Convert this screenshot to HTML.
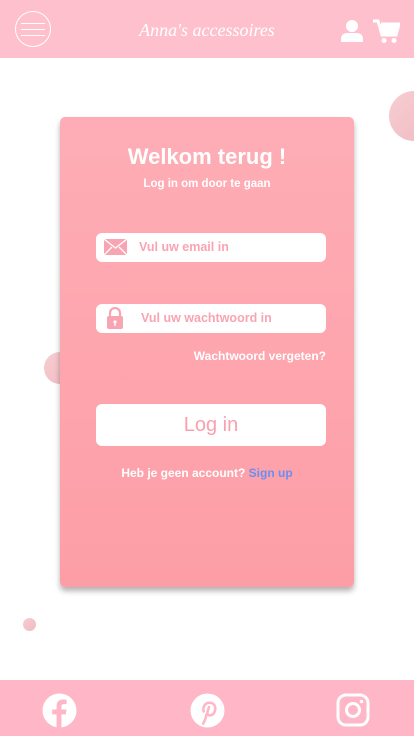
<!DOCTYPE html>
<html><head><meta charset="utf-8"><style>
*{margin:0;padding:0;box-sizing:border-box}
body{width:414px;height:736px;position:relative;overflow:hidden;background:#fff;font-family:"Liberation Sans",sans-serif}
.hdr{position:absolute;left:0;top:0;width:414px;height:58px;background:#ffc0cd}
.ttl{position:absolute;left:0;width:414px;top:20px;text-align:center;color:#fff;font-family:"Liberation Serif",serif;font-style:italic;font-size:18px}
.burg{position:absolute;left:15px;top:11px;width:36px;height:36px;border:1px solid #fff;border-radius:50%}
.burg i{position:absolute;left:5px;width:24px;height:1px;background:#fff}
.circ{position:absolute;border-radius:50%;background:linear-gradient(135deg,#f6ced3,#f0bac0)}
.card{position:absolute;left:60px;top:117px;width:294px;height:470px;border-radius:5px;background:linear-gradient(#feadb6,#fd9ea6);box-shadow:0 4px 6px rgba(0,0,0,.3)}
.t1{position:absolute;left:0;width:100%;top:27px;text-align:center;color:#fff;font-size:22px;font-weight:bold}
.t2{position:absolute;left:0;width:100%;top:61px;text-align:center;color:#fff;font-size:11.5px;font-weight:bold}
.inp{position:absolute;left:36px;width:230px;height:29px;background:#fff;border-radius:6px;color:#f9a4b2;font-size:12.5px;font-weight:bold}
.inp span{position:absolute;top:7px}
.btn{position:absolute;left:36px;top:287px;width:230px;height:42px;background:#fff;border-radius:6px;color:#fba0ad;font-size:20px;text-align:center;line-height:42px}
.ftr{position:absolute;left:0;top:680px;width:414px;height:56px;background:#ffb6c6}
</style></head><body>
<div class="hdr">
<div class="burg"><i style="top:11px"></i><i style="top:17px"></i><i style="top:23px"></i></div>
<div class="ttl">Anna's accessoires</div>
<svg style="position:absolute;left:340px;top:19px" width="24" height="24" viewBox="0 0 24 24"><circle cx="12" cy="7" r="6" fill="#fff"/><path d="M1 23v-3c0-4 3-6 6-6h10c3 0 6 2 6 6v3z" fill="#fff"/></svg>
<svg style="position:absolute;left:373px;top:19px" width="27" height="25" viewBox="0 0 27 25"><path d="M0 2h5l4 14h14l3-11H8" fill="none" stroke="#fff" stroke-width="3"/><path d="M7 5h19l-3 11H10z" fill="#fff"/><circle cx="11" cy="21.5" r="2.5" fill="#fff"/><circle cx="21" cy="21.5" r="2.5" fill="#fff"/></svg>
</div>
<div class="circ" style="left:389px;top:91px;width:50px;height:50px"></div>
<div class="circ" style="left:44px;top:352px;width:32px;height:32px"></div>
<div class="circ" style="left:23px;top:618px;width:13px;height:13px"></div>
<div class="card">
<div class="t1">Welkom terug !</div>
<div class="t2">Log in om door te gaan</div>
<div class="inp" style="top:116px"><svg style="position:absolute;left:8px;top:6px" width="23" height="16" viewBox="0 0 23 16"><rect width="23" height="16" fill="#f9a4b2"/><path d="M0 0l11.5 9L23 0M0 16l8-8M23 16l-8-8" stroke="#fff" stroke-width="1.3" fill="none"/></svg><span style="left:43px">Vul uw email in</span></div>
<div class="inp" style="top:187px"><svg style="position:absolute;left:10px;top:3px" width="18" height="22" viewBox="0 0 18 22"><path d="M4 10V6a5 5 0 0110 0v4" stroke="#f9a4b2" stroke-width="2.2" fill="none"/><rect x="1" y="9" width="16" height="13" rx="2" fill="#f9a4b2"/><circle cx="9" cy="15" r="1.6" fill="#fff"/><rect x="8.3" y="15" width="1.4" height="4" fill="#fff"/></svg><span style="left:45px">Vul uw wachtwoord in</span></div>
<div style="position:absolute;right:28px;top:232px;color:#fff;font-size:12px;font-weight:bold">Wachtwoord vergeten?</div>
<div class="btn">Log in</div>
<div style="position:absolute;left:0;width:100%;top:349px;text-align:center;color:#fff;font-size:12px;font-weight:bold">Heb je geen account? <span style="color:#6b8ef0">Sign up</span></div>
</div>
<div class="ftr">
<svg style="position:absolute;left:42px;top:13px" width="35" height="35" viewBox="0 0 36 36"><circle cx="18" cy="18" r="17.5" fill="#fff"/><path d="M20 36V22h4.5l.7-5H20v-3c0-1.5.5-2.5 2.6-2.5h2.7V7c-.5-.1-2-.3-3.9-.3-4 0-6.4 2.4-6.4 6.8V17h-4.5v5H15v14z" fill="#ffb6c6"/></svg>
<svg style="position:absolute;left:190px;top:13px" width="35" height="35" viewBox="0 0 36 36"><circle cx="18" cy="18" r="17.5" fill="#fff"/><path d="M17 22c-1 5-2 7-3.5 9.5M14 19c-1-4 1-9 6-9 4 0 6 2.5 6 6 0 4-2.5 7-5.5 7-2 0-3-1.5-2.5-3.5l1.5-5" stroke="#ffb6c6" stroke-width="2.6" fill="none" stroke-linecap="round"/></svg>
<svg style="position:absolute;left:336px;top:13px" width="34" height="34" viewBox="0 0 34 34"><rect x="2" y="2" width="30" height="30" rx="8" fill="none" stroke="#fff" stroke-width="3"/><circle cx="17" cy="17" r="6.5" fill="none" stroke="#fff" stroke-width="3"/><circle cx="25.5" cy="8.5" r="1.8" fill="#fff"/></svg>
</div>
</body></html>
